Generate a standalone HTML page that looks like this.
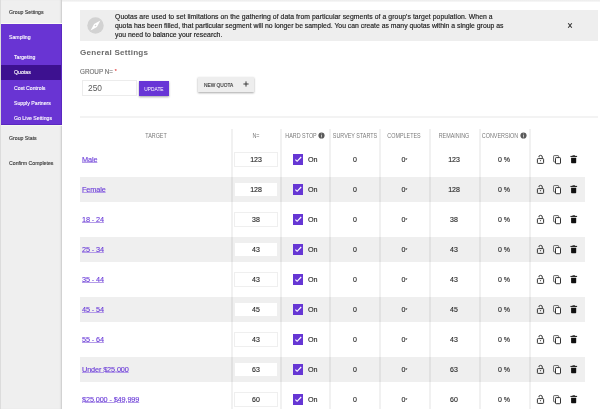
<!DOCTYPE html>
<html><head><meta charset="utf-8">
<style>
*{box-sizing:border-box;margin:0;padding:0}
html,body{width:600px;height:409px;overflow:hidden;background:#fff;font-family:"Liberation Sans",sans-serif;}
body>*,#side>*{will-change:transform}
body{-webkit-text-stroke:0.12px currentColor}
.topline{position:absolute;left:0;top:0;width:600px;height:2px;background:linear-gradient(#ebebeb,#f8f8f8)}
#side{position:absolute;left:0;top:0;width:62px;height:409px;background:#efefef;border-left:1px solid #dcdcdc;box-shadow:inset -2px 0 2px -1px rgba(0,0,0,0.16)}
.si{position:absolute;white-space:nowrap;font-size:5.2px;color:#333}
#purple{position:absolute;left:0;top:23px;width:61px;height:103px;background:#6934d3;border-top:1px solid #fbfbf6;border-bottom:1px solid #f6f8f0;box-shadow:inset -1px -1px 0 #5a28c0}
.pi{position:absolute;white-space:nowrap;font-size:5.2px;color:#fff}
#qsel{position:absolute;left:0;top:64.5px;width:60px;height:15.3px;background:#3d1190}
.abs{position:absolute;white-space:nowrap}
#info{position:absolute;left:80px;top:10px;width:518px;height:31px;background:#eeeeee}
#compass{position:absolute;left:86.6px;top:16.6px;width:17px;height:17px}
.infot{position:absolute;left:115px;top:13.2px;font-size:6.85px;line-height:8.75px;color:#1a1a1a;-webkit-text-stroke:0.15px #1a1a1a;white-space:nowrap}
.gs{position:absolute;left:80px;top:47.8px;font-size:8.1px;font-weight:bold;color:#6a6a6a;letter-spacing:0.25px;-webkit-text-stroke:0;white-space:nowrap}
.lbl{position:absolute;left:80px;top:68px;font-size:6.3px;color:#6e6e6e;white-space:nowrap}
#n250{position:absolute;left:82px;top:80px;width:55px;height:16px;border:1px solid #ececec;background:#fff;font-size:8.4px;color:#5a5a5a;padding:2px 0 0 5px;-webkit-text-stroke:0}
#upd{position:absolute;left:139px;top:81px;width:30px;height:15px;background:#6836d6;box-shadow:0 1px 2px rgba(0,0,0,.35);color:#fff;font-size:5.5px;text-align:center;line-height:15px;-webkit-text-stroke:0}
#newq{position:absolute;left:198px;top:77px;width:55.5px;height:15px;background:#eee;box-shadow:0 1px 2px rgba(0,0,0,.35);font-size:4.8px;color:#333;line-height:15px}
.sep{position:absolute;left:80px;top:116px;width:518px;height:2px;background:#f3f3f3}
.vl{position:absolute;top:129px;width:2px;height:280px;background:rgba(0,0,0,0.055)}
.row{position:absolute;left:80px;width:505px;height:25px;background:#efefef}
.ii{position:absolute;width:7px;height:7px}
.ii svg,.ic svg{display:block}
.ic{position:absolute}
.th{position:absolute;top:131.5px;width:100px;font-size:6.6px;transform:scaleX(0.82);color:#7a7a7a;-webkit-text-stroke:0;white-space:nowrap;text-align:center}
.tl{position:absolute;left:82px;font-size:7.3px;letter-spacing:-0.12px;color:#6a3bd8;-webkit-text-stroke:0.12px #6a3bd8;text-decoration:underline;text-decoration-color:#b49ce8;text-decoration-thickness:0.5px;text-underline-offset:0.3px;white-space:nowrap}
.nin{position:absolute;left:234px;width:44px;height:15px;background:#fff;border:1px solid #efefef;font-size:7px;color:#2a2a2a;-webkit-text-stroke:0.14px #2a2a2a;text-align:center;line-height:13px}
.cb{position:absolute;left:292.5px;width:10.5px;height:10.5px;background:#6636d4}
.on{position:absolute;left:308px;font-size:7.2px;color:#2a2a2a;-webkit-text-stroke:0.14px #2a2a2a}
.cell{position:absolute;font-size:7px;color:#2a2a2a;-webkit-text-stroke:0.14px #2a2a2a;text-align:center;white-space:nowrap}
</style></head><body>
<div class="topline"></div>
<div id="side">
  <div class="si" style="left:8px;top:9.2px">Group Settings</div>
  <div id="purple"></div>
  <div id="qsel"></div>
  <div class="pi" style="left:8px;top:34px">Sampling</div>
  <div class="pi" style="left:13px;top:54.3px">Targeting</div>
  <div class="pi" style="left:13px;top:69.3px">Quotas</div>
  <div class="pi" style="left:13px;top:84.8px">Cost Controls</div>
  <div class="pi" style="left:13px;top:100px">Supply Partners</div>
  <div class="pi" style="left:13px;top:115px">Go Live Settings</div>
  <div class="si" style="left:8px;top:135px">Group Stats</div>
  <div class="si" style="left:8px;top:160px">Confirm Completes</div>
</div>

<div id="info"></div>
<div id="compass"><svg width="17" height="17" viewBox="0 0 17 17" style="display:block"><circle cx="8.5" cy="8.5" r="8.2" fill="#d2d2d2"/><path d="M3.6 13.4 L7.1 7.1 L13.4 3.6 L9.9 9.9 Z" fill="#fff"/><circle cx="8.5" cy="8.5" r="0.8" fill="#d2d2d2"/></svg></div>
<div class="infot"><span style="letter-spacing:0.057px">Quotas are used to set limitations on the gathering of data from particular segments of a group's target population. When a</span><br>quota has been filled, that particular segment will no longer be sampled. You can create as many quotas within a single group as<br>you need to balance your research.</div>
<svg style="position:absolute;left:566px;top:21px" width="8" height="9" viewBox="0 0 8 9"><path d="M2.2 2.2 L5.8 6.8 M5.8 2.2 L2.2 6.8" stroke="#333" stroke-width="1.05" fill="none"/></svg>

<div class="gs">General Settings</div>
<div class="lbl">GROUP N= <span style="color:#e04040;font-size:5px;position:relative;top:-0.8px">*</span></div>
<div id="n250">250</div>
<div id="upd"><span style="display:inline-block;transform:scaleX(0.88);position:relative;top:0.6px">UPDATE</span></div>
<div id="newq"><span style="position:absolute;left:6px;top:0.6px">NEW QUOTA</span><svg style="position:absolute;left:45px;top:4.3px" width="6" height="6" viewBox="0 0 6 6"><path d="M0.4 3 H5.6 M3 0.4 V5.6" stroke="#333" stroke-width="0.95"/></svg></div>
<div class="sep"></div>

<div id="rows">
<div class="row" style="top:177px"></div>
<div class="row" style="top:237px"></div>
<div class="row" style="top:297px"></div>
<div class="row" style="top:357px"></div>
<div class="vl" style="left:231px"></div>
<div class="vl" style="left:280px"></div>
<div class="vl" style="left:329px"></div>
<div class="vl" style="left:379px"></div>
<div class="vl" style="left:429px"></div>
<div class="vl" style="left:479px"></div>
<div class="vl" style="left:529px"></div>
<div class="th" style="left:106.19999999999999px">TARGET</div>
<div class="th" style="left:206px">N=</div>
<div class="th" style="left:250.7px">HARD STOP</div>
<div class="th" style="left:305px">SURVEY STARTS</div>
<div class="th" style="left:354.3px">COMPLETES</div>
<div class="th" style="left:404.2px">REMAINING</div>
<div class="th" style="left:449.6px">CONVERSION</div>
<div class="ii" style="left:318px;top:132.3px"><svg width="7" height="7" viewBox="0 0 7 7"><circle cx="3.5" cy="3.5" r="3.1" fill="#5a5a5a"/><rect x="3.05" y="3" width="0.9" height="2.4" fill="#cfcfcf"/><rect x="3.05" y="1.6" width="0.9" height="0.8" fill="#cfcfcf"/></svg></div><div class="ii" style="left:519.8px;top:132.3px"><svg width="7" height="7" viewBox="0 0 7 7"><circle cx="3.5" cy="3.5" r="3.1" fill="#5a5a5a"/><rect x="3.05" y="3" width="0.9" height="2.4" fill="#cfcfcf"/><rect x="3.05" y="1.6" width="0.9" height="0.8" fill="#cfcfcf"/></svg></div>
<div class="tl" style="top:155.0px">Male</div>
<div class="nin" style="top:152.0px">123</div>
<div class="cb" style="top:154.3px"><svg width="10.5" height="10.5" viewBox="0 0 10.5 10.5" style="display:block"><path d="M2.4 5.7 L4.1 7.3 L8.2 3.0" stroke="#fff" stroke-width="1.15" fill="none"/></svg></div>
<div class="on" style="top:154.9px">On</div>
<div class="cell" style="left:330px;width:50px;top:156.3px">0</div>
<div class="cell" style="left:380px;width:49px;top:156.3px">0<span style="font-size:5.6px;-webkit-text-stroke:0;position:relative;top:-0.4px">*</span></div>
<div class="cell" style="left:429px;width:50px;top:156.3px">123</div>
<div class="cell" style="left:479px;width:50px;top:156.3px">0 %</div>
<div class="ic" style="left:536px;top:154.0px"><svg width="9" height="11" viewBox="0 0 9 11"><rect x="1.4" y="4.6" width="6.2" height="4.8" rx="0.7" fill="none" stroke="#333" stroke-width="1"/><path d="M2.8 4.3 V3.1 A1.75 1.75 0 0 1 6.3 3.1 V4.4" fill="none" stroke="#333" stroke-width="1"/><rect x="2.1" y="3.0" width="1.3" height="1.1" fill="#fff"/><path d="M3.8 6.2 H5.2 L4.5 7.6 Z" fill="#222"/></svg></div>
<div class="ic" style="left:552px;top:154.0px"><svg width="10" height="11" viewBox="0 0 10 11"><rect x="1.6" y="1.6" width="5.0" height="6.3" rx="0.6" fill="#fff" stroke="#555" stroke-width="0.9"/><rect x="3.5" y="3.6" width="5.0" height="6.1" rx="0.7" fill="#fff" stroke="#333" stroke-width="1"/></svg></div>
<div class="ic" style="left:569px;top:154.0px"><svg width="9" height="11" viewBox="0 0 9 11"><rect x="1.4" y="1.9" width="6.7" height="1.0" fill="#111"/><rect x="3.4" y="1.2" width="2.7" height="1" rx="0.4" fill="#333"/><path d="M2.1 3.7 H7.2 V8.6 Q7.2 9.3 6.5 9.3 H2.8 Q2.1 9.3 2.1 8.6 Z" fill="#111"/></svg></div>
<div class="tl" style="top:185.0px">Female</div>
<div class="nin" style="top:182.0px">128</div>
<div class="cb" style="top:184.3px"><svg width="10.5" height="10.5" viewBox="0 0 10.5 10.5" style="display:block"><path d="M2.4 5.7 L4.1 7.3 L8.2 3.0" stroke="#fff" stroke-width="1.15" fill="none"/></svg></div>
<div class="on" style="top:184.9px">On</div>
<div class="cell" style="left:330px;width:50px;top:186.3px">0</div>
<div class="cell" style="left:380px;width:49px;top:186.3px">0<span style="font-size:5.6px;-webkit-text-stroke:0;position:relative;top:-0.4px">*</span></div>
<div class="cell" style="left:429px;width:50px;top:186.3px">128</div>
<div class="cell" style="left:479px;width:50px;top:186.3px">0 %</div>
<div class="ic" style="left:536px;top:184.0px"><svg width="9" height="11" viewBox="0 0 9 11"><rect x="1.4" y="4.6" width="6.2" height="4.8" rx="0.7" fill="none" stroke="#333" stroke-width="1"/><path d="M2.8 4.3 V3.1 A1.75 1.75 0 0 1 6.3 3.1 V4.4" fill="none" stroke="#333" stroke-width="1"/><rect x="2.1" y="3.0" width="1.3" height="1.1" fill="#fff"/><path d="M3.8 6.2 H5.2 L4.5 7.6 Z" fill="#222"/></svg></div>
<div class="ic" style="left:552px;top:184.0px"><svg width="10" height="11" viewBox="0 0 10 11"><rect x="1.6" y="1.6" width="5.0" height="6.3" rx="0.6" fill="#fff" stroke="#555" stroke-width="0.9"/><rect x="3.5" y="3.6" width="5.0" height="6.1" rx="0.7" fill="#fff" stroke="#333" stroke-width="1"/></svg></div>
<div class="ic" style="left:569px;top:184.0px"><svg width="9" height="11" viewBox="0 0 9 11"><rect x="1.4" y="1.9" width="6.7" height="1.0" fill="#111"/><rect x="3.4" y="1.2" width="2.7" height="1" rx="0.4" fill="#333"/><path d="M2.1 3.7 H7.2 V8.6 Q7.2 9.3 6.5 9.3 H2.8 Q2.1 9.3 2.1 8.6 Z" fill="#111"/></svg></div>
<div class="tl" style="top:215.0px">18 - 24</div>
<div class="nin" style="top:212.0px">38</div>
<div class="cb" style="top:214.3px"><svg width="10.5" height="10.5" viewBox="0 0 10.5 10.5" style="display:block"><path d="M2.4 5.7 L4.1 7.3 L8.2 3.0" stroke="#fff" stroke-width="1.15" fill="none"/></svg></div>
<div class="on" style="top:214.9px">On</div>
<div class="cell" style="left:330px;width:50px;top:216.3px">0</div>
<div class="cell" style="left:380px;width:49px;top:216.3px">0<span style="font-size:5.6px;-webkit-text-stroke:0;position:relative;top:-0.4px">*</span></div>
<div class="cell" style="left:429px;width:50px;top:216.3px">38</div>
<div class="cell" style="left:479px;width:50px;top:216.3px">0 %</div>
<div class="ic" style="left:536px;top:214.0px"><svg width="9" height="11" viewBox="0 0 9 11"><rect x="1.4" y="4.6" width="6.2" height="4.8" rx="0.7" fill="none" stroke="#333" stroke-width="1"/><path d="M2.8 4.3 V3.1 A1.75 1.75 0 0 1 6.3 3.1 V4.4" fill="none" stroke="#333" stroke-width="1"/><rect x="2.1" y="3.0" width="1.3" height="1.1" fill="#fff"/><path d="M3.8 6.2 H5.2 L4.5 7.6 Z" fill="#222"/></svg></div>
<div class="ic" style="left:552px;top:214.0px"><svg width="10" height="11" viewBox="0 0 10 11"><rect x="1.6" y="1.6" width="5.0" height="6.3" rx="0.6" fill="#fff" stroke="#555" stroke-width="0.9"/><rect x="3.5" y="3.6" width="5.0" height="6.1" rx="0.7" fill="#fff" stroke="#333" stroke-width="1"/></svg></div>
<div class="ic" style="left:569px;top:214.0px"><svg width="9" height="11" viewBox="0 0 9 11"><rect x="1.4" y="1.9" width="6.7" height="1.0" fill="#111"/><rect x="3.4" y="1.2" width="2.7" height="1" rx="0.4" fill="#333"/><path d="M2.1 3.7 H7.2 V8.6 Q7.2 9.3 6.5 9.3 H2.8 Q2.1 9.3 2.1 8.6 Z" fill="#111"/></svg></div>
<div class="tl" style="top:245.0px">25 - 34</div>
<div class="nin" style="top:242.0px">43</div>
<div class="cb" style="top:244.3px"><svg width="10.5" height="10.5" viewBox="0 0 10.5 10.5" style="display:block"><path d="M2.4 5.7 L4.1 7.3 L8.2 3.0" stroke="#fff" stroke-width="1.15" fill="none"/></svg></div>
<div class="on" style="top:244.9px">On</div>
<div class="cell" style="left:330px;width:50px;top:246.3px">0</div>
<div class="cell" style="left:380px;width:49px;top:246.3px">0<span style="font-size:5.6px;-webkit-text-stroke:0;position:relative;top:-0.4px">*</span></div>
<div class="cell" style="left:429px;width:50px;top:246.3px">43</div>
<div class="cell" style="left:479px;width:50px;top:246.3px">0 %</div>
<div class="ic" style="left:536px;top:244.0px"><svg width="9" height="11" viewBox="0 0 9 11"><rect x="1.4" y="4.6" width="6.2" height="4.8" rx="0.7" fill="none" stroke="#333" stroke-width="1"/><path d="M2.8 4.3 V3.1 A1.75 1.75 0 0 1 6.3 3.1 V4.4" fill="none" stroke="#333" stroke-width="1"/><rect x="2.1" y="3.0" width="1.3" height="1.1" fill="#fff"/><path d="M3.8 6.2 H5.2 L4.5 7.6 Z" fill="#222"/></svg></div>
<div class="ic" style="left:552px;top:244.0px"><svg width="10" height="11" viewBox="0 0 10 11"><rect x="1.6" y="1.6" width="5.0" height="6.3" rx="0.6" fill="#fff" stroke="#555" stroke-width="0.9"/><rect x="3.5" y="3.6" width="5.0" height="6.1" rx="0.7" fill="#fff" stroke="#333" stroke-width="1"/></svg></div>
<div class="ic" style="left:569px;top:244.0px"><svg width="9" height="11" viewBox="0 0 9 11"><rect x="1.4" y="1.9" width="6.7" height="1.0" fill="#111"/><rect x="3.4" y="1.2" width="2.7" height="1" rx="0.4" fill="#333"/><path d="M2.1 3.7 H7.2 V8.6 Q7.2 9.3 6.5 9.3 H2.8 Q2.1 9.3 2.1 8.6 Z" fill="#111"/></svg></div>
<div class="tl" style="top:275.0px">35 - 44</div>
<div class="nin" style="top:272.0px">43</div>
<div class="cb" style="top:274.3px"><svg width="10.5" height="10.5" viewBox="0 0 10.5 10.5" style="display:block"><path d="M2.4 5.7 L4.1 7.3 L8.2 3.0" stroke="#fff" stroke-width="1.15" fill="none"/></svg></div>
<div class="on" style="top:274.9px">On</div>
<div class="cell" style="left:330px;width:50px;top:276.3px">0</div>
<div class="cell" style="left:380px;width:49px;top:276.3px">0<span style="font-size:5.6px;-webkit-text-stroke:0;position:relative;top:-0.4px">*</span></div>
<div class="cell" style="left:429px;width:50px;top:276.3px">43</div>
<div class="cell" style="left:479px;width:50px;top:276.3px">0 %</div>
<div class="ic" style="left:536px;top:274.0px"><svg width="9" height="11" viewBox="0 0 9 11"><rect x="1.4" y="4.6" width="6.2" height="4.8" rx="0.7" fill="none" stroke="#333" stroke-width="1"/><path d="M2.8 4.3 V3.1 A1.75 1.75 0 0 1 6.3 3.1 V4.4" fill="none" stroke="#333" stroke-width="1"/><rect x="2.1" y="3.0" width="1.3" height="1.1" fill="#fff"/><path d="M3.8 6.2 H5.2 L4.5 7.6 Z" fill="#222"/></svg></div>
<div class="ic" style="left:552px;top:274.0px"><svg width="10" height="11" viewBox="0 0 10 11"><rect x="1.6" y="1.6" width="5.0" height="6.3" rx="0.6" fill="#fff" stroke="#555" stroke-width="0.9"/><rect x="3.5" y="3.6" width="5.0" height="6.1" rx="0.7" fill="#fff" stroke="#333" stroke-width="1"/></svg></div>
<div class="ic" style="left:569px;top:274.0px"><svg width="9" height="11" viewBox="0 0 9 11"><rect x="1.4" y="1.9" width="6.7" height="1.0" fill="#111"/><rect x="3.4" y="1.2" width="2.7" height="1" rx="0.4" fill="#333"/><path d="M2.1 3.7 H7.2 V8.6 Q7.2 9.3 6.5 9.3 H2.8 Q2.1 9.3 2.1 8.6 Z" fill="#111"/></svg></div>
<div class="tl" style="top:305.0px">45 - 54</div>
<div class="nin" style="top:302.0px">45</div>
<div class="cb" style="top:304.3px"><svg width="10.5" height="10.5" viewBox="0 0 10.5 10.5" style="display:block"><path d="M2.4 5.7 L4.1 7.3 L8.2 3.0" stroke="#fff" stroke-width="1.15" fill="none"/></svg></div>
<div class="on" style="top:304.9px">On</div>
<div class="cell" style="left:330px;width:50px;top:306.3px">0</div>
<div class="cell" style="left:380px;width:49px;top:306.3px">0<span style="font-size:5.6px;-webkit-text-stroke:0;position:relative;top:-0.4px">*</span></div>
<div class="cell" style="left:429px;width:50px;top:306.3px">45</div>
<div class="cell" style="left:479px;width:50px;top:306.3px">0 %</div>
<div class="ic" style="left:536px;top:304.0px"><svg width="9" height="11" viewBox="0 0 9 11"><rect x="1.4" y="4.6" width="6.2" height="4.8" rx="0.7" fill="none" stroke="#333" stroke-width="1"/><path d="M2.8 4.3 V3.1 A1.75 1.75 0 0 1 6.3 3.1 V4.4" fill="none" stroke="#333" stroke-width="1"/><rect x="2.1" y="3.0" width="1.3" height="1.1" fill="#fff"/><path d="M3.8 6.2 H5.2 L4.5 7.6 Z" fill="#222"/></svg></div>
<div class="ic" style="left:552px;top:304.0px"><svg width="10" height="11" viewBox="0 0 10 11"><rect x="1.6" y="1.6" width="5.0" height="6.3" rx="0.6" fill="#fff" stroke="#555" stroke-width="0.9"/><rect x="3.5" y="3.6" width="5.0" height="6.1" rx="0.7" fill="#fff" stroke="#333" stroke-width="1"/></svg></div>
<div class="ic" style="left:569px;top:304.0px"><svg width="9" height="11" viewBox="0 0 9 11"><rect x="1.4" y="1.9" width="6.7" height="1.0" fill="#111"/><rect x="3.4" y="1.2" width="2.7" height="1" rx="0.4" fill="#333"/><path d="M2.1 3.7 H7.2 V8.6 Q7.2 9.3 6.5 9.3 H2.8 Q2.1 9.3 2.1 8.6 Z" fill="#111"/></svg></div>
<div class="tl" style="top:335.0px">55 - 64</div>
<div class="nin" style="top:332.0px">43</div>
<div class="cb" style="top:334.3px"><svg width="10.5" height="10.5" viewBox="0 0 10.5 10.5" style="display:block"><path d="M2.4 5.7 L4.1 7.3 L8.2 3.0" stroke="#fff" stroke-width="1.15" fill="none"/></svg></div>
<div class="on" style="top:334.9px">On</div>
<div class="cell" style="left:330px;width:50px;top:336.3px">0</div>
<div class="cell" style="left:380px;width:49px;top:336.3px">0<span style="font-size:5.6px;-webkit-text-stroke:0;position:relative;top:-0.4px">*</span></div>
<div class="cell" style="left:429px;width:50px;top:336.3px">43</div>
<div class="cell" style="left:479px;width:50px;top:336.3px">0 %</div>
<div class="ic" style="left:536px;top:334.0px"><svg width="9" height="11" viewBox="0 0 9 11"><rect x="1.4" y="4.6" width="6.2" height="4.8" rx="0.7" fill="none" stroke="#333" stroke-width="1"/><path d="M2.8 4.3 V3.1 A1.75 1.75 0 0 1 6.3 3.1 V4.4" fill="none" stroke="#333" stroke-width="1"/><rect x="2.1" y="3.0" width="1.3" height="1.1" fill="#fff"/><path d="M3.8 6.2 H5.2 L4.5 7.6 Z" fill="#222"/></svg></div>
<div class="ic" style="left:552px;top:334.0px"><svg width="10" height="11" viewBox="0 0 10 11"><rect x="1.6" y="1.6" width="5.0" height="6.3" rx="0.6" fill="#fff" stroke="#555" stroke-width="0.9"/><rect x="3.5" y="3.6" width="5.0" height="6.1" rx="0.7" fill="#fff" stroke="#333" stroke-width="1"/></svg></div>
<div class="ic" style="left:569px;top:334.0px"><svg width="9" height="11" viewBox="0 0 9 11"><rect x="1.4" y="1.9" width="6.7" height="1.0" fill="#111"/><rect x="3.4" y="1.2" width="2.7" height="1" rx="0.4" fill="#333"/><path d="M2.1 3.7 H7.2 V8.6 Q7.2 9.3 6.5 9.3 H2.8 Q2.1 9.3 2.1 8.6 Z" fill="#111"/></svg></div>
<div class="tl" style="top:365.0px">Under $25,000</div>
<div class="nin" style="top:362.0px">63</div>
<div class="cb" style="top:364.3px"><svg width="10.5" height="10.5" viewBox="0 0 10.5 10.5" style="display:block"><path d="M2.4 5.7 L4.1 7.3 L8.2 3.0" stroke="#fff" stroke-width="1.15" fill="none"/></svg></div>
<div class="on" style="top:364.9px">On</div>
<div class="cell" style="left:330px;width:50px;top:366.3px">0</div>
<div class="cell" style="left:380px;width:49px;top:366.3px">0<span style="font-size:5.6px;-webkit-text-stroke:0;position:relative;top:-0.4px">*</span></div>
<div class="cell" style="left:429px;width:50px;top:366.3px">63</div>
<div class="cell" style="left:479px;width:50px;top:366.3px">0 %</div>
<div class="ic" style="left:536px;top:364.0px"><svg width="9" height="11" viewBox="0 0 9 11"><rect x="1.4" y="4.6" width="6.2" height="4.8" rx="0.7" fill="none" stroke="#333" stroke-width="1"/><path d="M2.8 4.3 V3.1 A1.75 1.75 0 0 1 6.3 3.1 V4.4" fill="none" stroke="#333" stroke-width="1"/><rect x="2.1" y="3.0" width="1.3" height="1.1" fill="#fff"/><path d="M3.8 6.2 H5.2 L4.5 7.6 Z" fill="#222"/></svg></div>
<div class="ic" style="left:552px;top:364.0px"><svg width="10" height="11" viewBox="0 0 10 11"><rect x="1.6" y="1.6" width="5.0" height="6.3" rx="0.6" fill="#fff" stroke="#555" stroke-width="0.9"/><rect x="3.5" y="3.6" width="5.0" height="6.1" rx="0.7" fill="#fff" stroke="#333" stroke-width="1"/></svg></div>
<div class="ic" style="left:569px;top:364.0px"><svg width="9" height="11" viewBox="0 0 9 11"><rect x="1.4" y="1.9" width="6.7" height="1.0" fill="#111"/><rect x="3.4" y="1.2" width="2.7" height="1" rx="0.4" fill="#333"/><path d="M2.1 3.7 H7.2 V8.6 Q7.2 9.3 6.5 9.3 H2.8 Q2.1 9.3 2.1 8.6 Z" fill="#111"/></svg></div>
<div class="tl" style="top:395.0px">$25,000 - $49,999</div>
<div class="nin" style="top:392.0px">60</div>
<div class="cb" style="top:394.3px"><svg width="10.5" height="10.5" viewBox="0 0 10.5 10.5" style="display:block"><path d="M2.4 5.7 L4.1 7.3 L8.2 3.0" stroke="#fff" stroke-width="1.15" fill="none"/></svg></div>
<div class="on" style="top:394.9px">On</div>
<div class="cell" style="left:330px;width:50px;top:396.3px">0</div>
<div class="cell" style="left:380px;width:49px;top:396.3px">0<span style="font-size:5.6px;-webkit-text-stroke:0;position:relative;top:-0.4px">*</span></div>
<div class="cell" style="left:429px;width:50px;top:396.3px">60</div>
<div class="cell" style="left:479px;width:50px;top:396.3px">0 %</div>
<div class="ic" style="left:536px;top:394.0px"><svg width="9" height="11" viewBox="0 0 9 11"><rect x="1.4" y="4.6" width="6.2" height="4.8" rx="0.7" fill="none" stroke="#333" stroke-width="1"/><path d="M2.8 4.3 V3.1 A1.75 1.75 0 0 1 6.3 3.1 V4.4" fill="none" stroke="#333" stroke-width="1"/><rect x="2.1" y="3.0" width="1.3" height="1.1" fill="#fff"/><path d="M3.8 6.2 H5.2 L4.5 7.6 Z" fill="#222"/></svg></div>
<div class="ic" style="left:552px;top:394.0px"><svg width="10" height="11" viewBox="0 0 10 11"><rect x="1.6" y="1.6" width="5.0" height="6.3" rx="0.6" fill="#fff" stroke="#555" stroke-width="0.9"/><rect x="3.5" y="3.6" width="5.0" height="6.1" rx="0.7" fill="#fff" stroke="#333" stroke-width="1"/></svg></div>
<div class="ic" style="left:569px;top:394.0px"><svg width="9" height="11" viewBox="0 0 9 11"><rect x="1.4" y="1.9" width="6.7" height="1.0" fill="#111"/><rect x="3.4" y="1.2" width="2.7" height="1" rx="0.4" fill="#333"/><path d="M2.1 3.7 H7.2 V8.6 Q7.2 9.3 6.5 9.3 H2.8 Q2.1 9.3 2.1 8.6 Z" fill="#111"/></svg></div>
</div>
</body></html>
